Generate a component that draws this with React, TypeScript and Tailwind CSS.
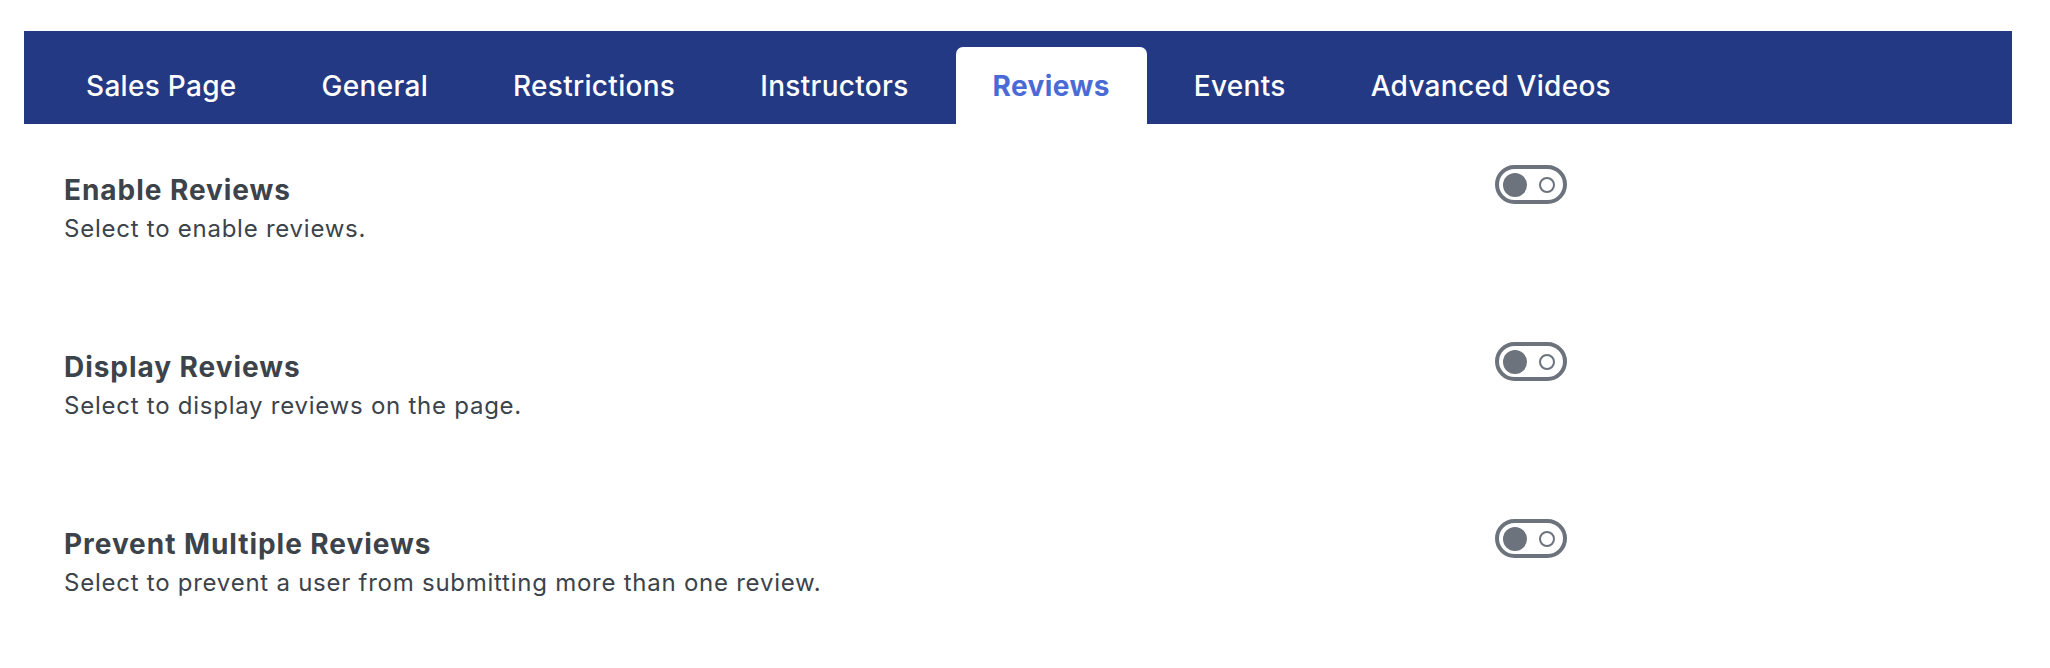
import React from "react";

const tabs = ["Sales Page", "General", "Restrictions", "Instructors", "Reviews", "Events", "Advanced Videos"];

const rows = [
  { title: "Enable Reviews", desc: "Select to enable reviews." },
  { title: "Display Reviews", desc: "Select to display reviews on the page." },
  { title: "Prevent Multiple Reviews", desc: "Select to prevent a user from submitting more than one review." },
];

function Toggle() {
  return (
    <div className="w-[72px] h-[39px] shrink-0 rounded-full border-[4px] border-[#6c737c] flex items-center justify-between pl-[4px] pr-[8px] box-border">
      <div className="w-[24px] h-[24px] rounded-full bg-[#6c737c]" />
      <div className="w-[16px] h-[16px] rounded-full border-2 border-[#6c737c]" />
    </div>
  );
}

export default function App() {
  return (
    <div
      className="min-h-[668px] bg-white pt-[31px] pl-[24px] pr-[38px]"
      style={{ fontFamily: "Inter, 'Noto Sans', sans-serif" }}
    >
      <div className="h-[93px] bg-[#233984] flex items-end pl-[24px] gap-[9px]">
        {tabs.map((t) => {
          const active = t === "Reviews";
          return (
            <div
              key={t}
              className={
                active
                  ? "h-[77px] px-[37px] flex items-center rounded-t-[7px] bg-white text-[#4a6ad6] font-bold text-[28px] tracking-[0.4px]"
                  : "h-[77px] px-[38px] flex items-center text-white font-medium text-[28px] tracking-[0.3px]"
              }
            >
              {t}
            </div>
          );
        })}
      </div>
      <div className="pt-[41px] px-[40px] flex flex-col gap-[100px]">
        {rows.map((r) => (
          <div key={r.title} className="flex items-start">
            <div className="w-[1431px] shrink-0 pt-[12px] text-[#3c434a]">
              <div className="text-[28px] leading-[26px] font-bold tracking-[0.95px]">{r.title}</div>
              <div className="mt-[13px] text-[24px] leading-[26px] tracking-[0.75px]">{r.desc}</div>
            </div>
            <Toggle />
          </div>
        ))}
      </div>
    </div>
  );
}
